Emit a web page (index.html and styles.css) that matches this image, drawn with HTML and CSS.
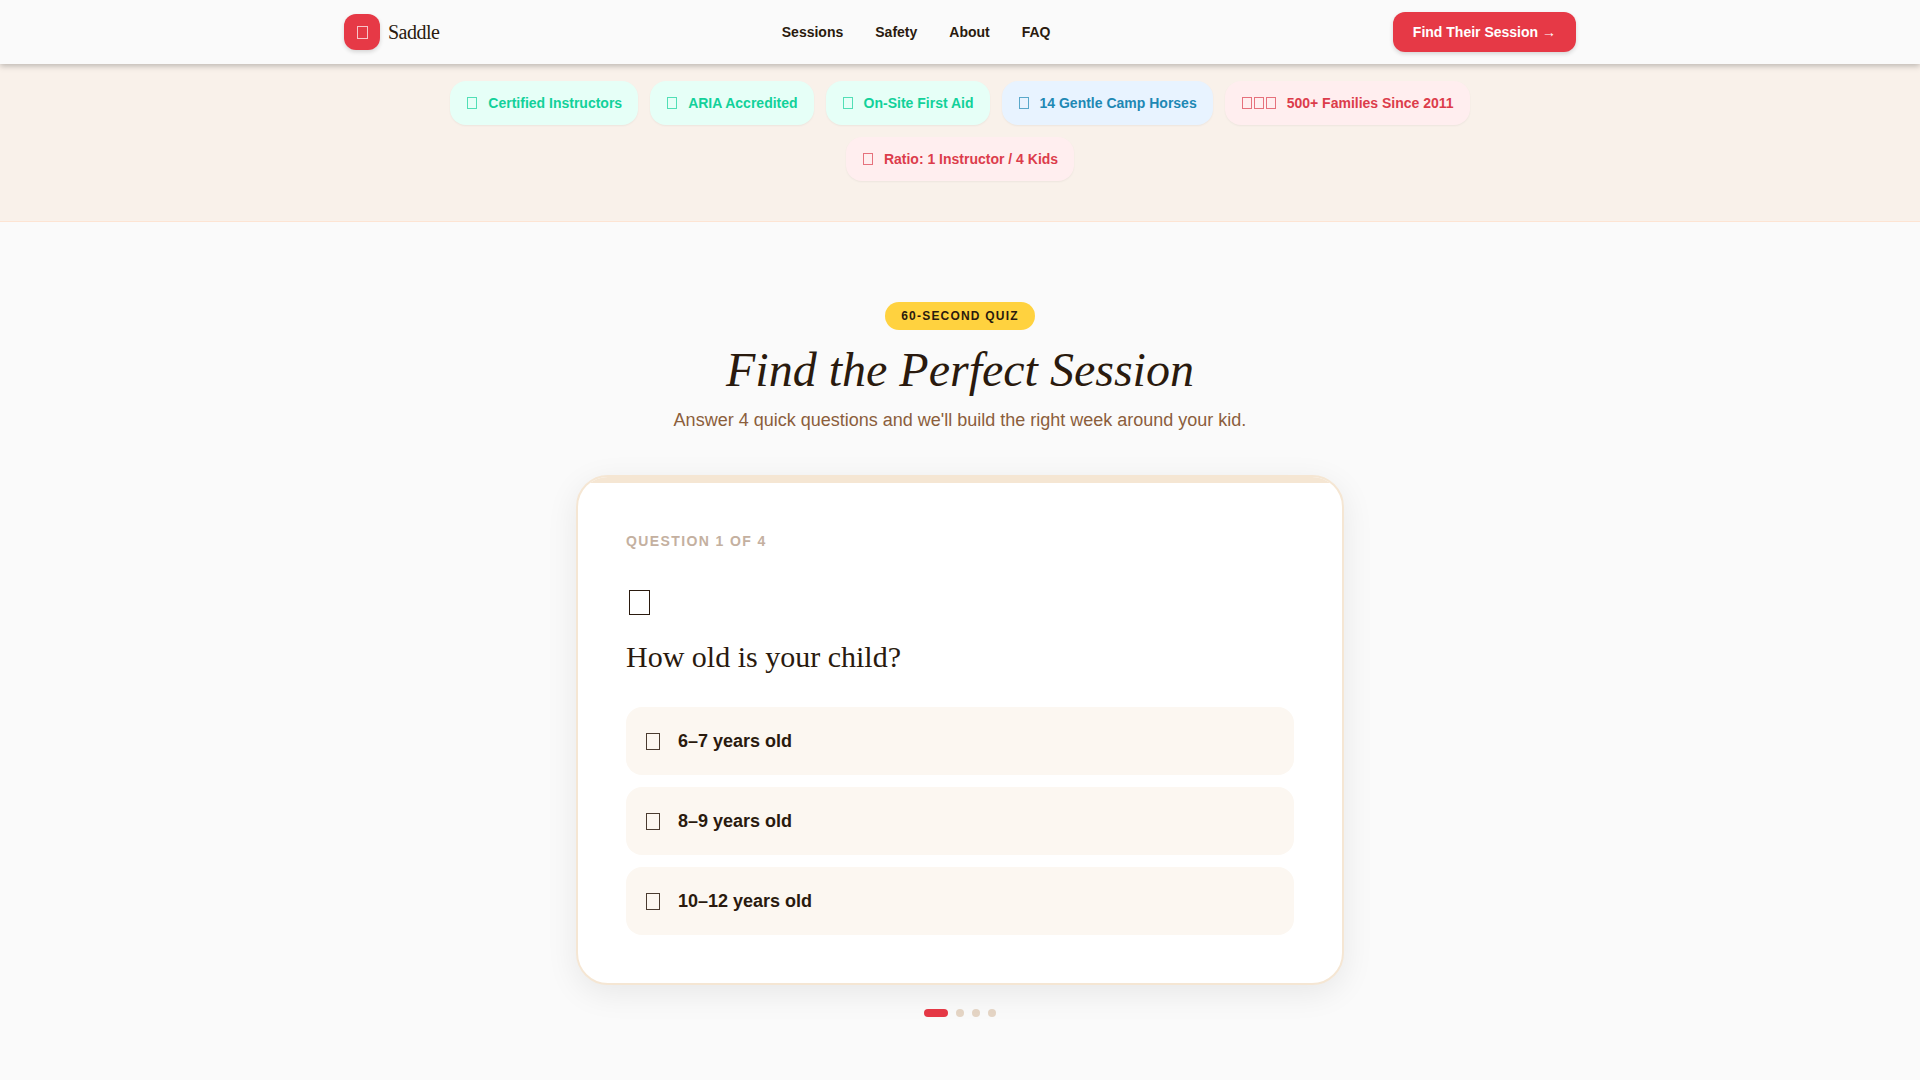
FILE: index.html
```
<!doctype html>
<html lang="en">
  <head>
    <meta charset="utf-8" />
    <meta name="viewport" content="width=device-width, initial-scale=1" />
    <title>Saddle</title>
    <link rel="stylesheet" href="styles.css">
  </head>
  <body>
    <header class="site-header">
      <div class="header-inner">
        <a class="brand" href="#">
          <span class="brand-mark"><i class="glyph glyph-brand"></i></span>
          <span class="brand-name">Saddle</span>
        </a>
        <nav class="main-nav">
          <a href="#sessions">Sessions</a>
          <a href="#safety">Safety</a>
          <a href="#about">About</a>
          <a href="#faq">FAQ</a>
        </nav>
        <a class="cta" href="#quiz">Find Their Session →</a>
      </div>
    </header>

    <main>
      <section class="trust" id="safety">
        <ul class="chips">
          <li class="chip chip-green"><span class="chip-icon"><i class="glyph"></i></span>Certified Instructors</li>
          <li class="chip chip-green"><span class="chip-icon"><i class="glyph"></i></span>ARIA Accredited</li>
          <li class="chip chip-green"><span class="chip-icon"><i class="glyph"></i></span>On-Site First Aid</li>
          <li class="chip chip-blue"><span class="chip-icon"><i class="glyph"></i></span>14 Gentle Camp Horses</li>
          <li class="chip chip-red"><span class="chip-icon"><i class="glyph"></i><i class="glyph"></i><i class="glyph"></i></span>500+ Families Since 2011</li>
          <li class="chip chip-red"><span class="chip-icon"><i class="glyph"></i></span>Ratio: 1 Instructor / 4 Kids</li>
        </ul>
      </section>

      <section class="quiz" id="quiz">
        <span class="badge">60-Second Quiz</span>
        <h1 class="quiz-title">Find the Perfect Session</h1>
        <p class="quiz-lead">Answer 4 quick questions and we'll build the right week around your kid.</p>

        <div class="card">
          <p class="step">Question 1 of 4</p>
          <div class="question-icon"><i class="glyph glyph-large"></i></div>
          <h2 class="question">How old is your child?</h2>
          <div class="options">
            <button type="button" class="option"><i class="glyph glyph-option"></i>6–7 years old</button>
            <button type="button" class="option"><i class="glyph glyph-option"></i>8–9 years old</button>
            <button type="button" class="option"><i class="glyph glyph-option"></i>10–12 years old</button>
          </div>
        </div>

        <div class="dots">
          <span class="dot dot-active"></span>
          <span class="dot"></span>
          <span class="dot"></span>
          <span class="dot"></span>
        </div>
      </section>
    </main>
  </body>
</html>
```
FILE: styles.css
```
* {
  box-sizing: border-box;
}

body {
  margin: 0;
  background: #fafafa;
  color: #2a1a0e;
  font: 16px/24px "Liberation Sans", Arial, sans-serif;
}

h1, h2, p, ul {
  margin: 0;
  padding: 0;
}

a {
  color: inherit;
  text-decoration: none;
}

/* outlined box icon, takes the text colour */
.glyph {
  display: block;
  flex: none;
  width: 10px;
  height: 12px;
  margin: 0 1px;
  border: 1px solid;
  opacity: .7;
}

.glyph-brand {
  width: 11px;
  height: 13px;
}

.glyph-option {
  width: 14px;
  height: 17px;
  margin: 0 2px;
  opacity: .85;
}

.glyph-large {
  width: 21px;
  height: 25px;
  margin: 0 3px;
  opacity: 1;
}

/* header */
.site-header {
  position: sticky;
  top: 0;
  z-index: 10;
  background: #fafafa;
  box-shadow: 0 2px 6px rgba(0, 0, 0, .25);
}

.header-inner {
  display: flex;
  align-items: center;
  justify-content: space-between;
  max-width: 1280px;
  height: 64px;
  margin: 0 auto;
  padding: 0 24px;
}

.brand {
  display: flex;
  align-items: center;
  gap: 8px;
}

.brand-mark {
  display: flex;
  align-items: center;
  justify-content: center;
  width: 36px;
  height: 36px;
  border-radius: 12px;
  background: #e63946;
  color: #fff;
  box-shadow: 0 2px 4px rgba(0, 0, 0, .15);
}

.brand-name {
  font-family: "Liberation Serif", "Times New Roman", serif;
  font-size: 20px;
  letter-spacing: -.5px;
}

.main-nav {
  display: flex;
  gap: 32px;
  font-size: 14px;
  font-weight: bold;
}

.cta {
  padding: 8px 20px;
  border-radius: 12px;
  background: #e63946;
  color: #fff;
  font-size: 14px;
  font-weight: bold;
  box-shadow: 0 2px 4px rgba(0, 0, 0, .15);
}

/* trust chips */
.trust {
  padding: 17px 0 40px;
  background: #f9f1ea;
  border-bottom: 1px solid #fde4d3;
}

.chips {
  display: flex;
  flex-wrap: wrap;
  justify-content: center;
  gap: 12px;
  max-width: 1280px;
  margin: 0 auto;
  padding: 0 24px;
  list-style: none;
}

.chip {
  display: flex;
  align-items: center;
  gap: 10px;
  padding: 10px 16px;
  border-radius: 16px;
  font-size: 14px;
  font-weight: bold;
  box-shadow: 0 1px 2px rgba(0, 0, 0, .05);
}

.chip-icon {
  display: flex;
}

.chip-green {
  background: #e6fff7;
  color: #12d19a;
}

.chip-blue {
  background: #e8f3ff;
  color: #1e88b4;
}

.chip-red {
  background: #ffeeef;
  color: #dc3c4b;
}

/* quiz */
.quiz {
  display: flex;
  flex-direction: column;
  align-items: center;
  padding: 80px 24px;
}

.badge {
  padding: 6px 16px;
  border-radius: 14px;
  background: #ffd23f;
  font-size: 12px;
  line-height: 16px;
  font-weight: bold;
  letter-spacing: 1.2px;
  text-transform: uppercase;
}

.quiz-title {
  margin: 12px 0 8px;
  font: italic 48px/56px "Liberation Serif", "Times New Roman", serif;
}

.quiz-lead {
  color: #8b5e3c;
  font-size: 18px;
  line-height: 28px;
}

.card {
  position: relative;
  overflow: hidden;
  width: 100%;
  max-width: 768px;
  margin-top: 41px;
  padding: 48px;
  border: 2px solid #f5e6d3;
  border-radius: 32px;
  background: #fff;
  box-shadow: 0 8px 32px rgba(0, 0, 0, .08);
}

/* progress track along the top edge */
.card::before {
  content: "";
  position: absolute;
  top: 0;
  left: 0;
  right: 0;
  height: 6px;
  background: #f5e6d3;
}

.step {
  margin-bottom: 24px;
  color: #c4b0a0;
  font-size: 14px;
  line-height: 32px;
  font-weight: bold;
  letter-spacing: 1.4px;
  text-transform: uppercase;
}

.question-icon {
  display: flex;
  align-items: center;
  height: 42px;
}

.question {
  margin: 14px 0 30px;
  font: 30px/40px "Liberation Serif", "Times New Roman", serif;
}

.options {
  display: flex;
  flex-direction: column;
  gap: 12px;
}

.option {
  display: flex;
  align-items: center;
  gap: 16px;
  padding: 20px 18px;
  border: 0;
  border-radius: 16px;
  background: #fcf7f1;
  color: inherit;
  font: bold 18px/28px "Liberation Sans", Arial, sans-serif;
  text-align: left;
  cursor: pointer;
}

.option:hover {
  background: #f5e6d3;
}

.dots {
  display: flex;
  gap: 8px;
  margin-top: 24px;
}

.dot {
  width: 8px;
  height: 8px;
  border-radius: 4px;
  background: #e5d5c5;
}

.dot-active {
  width: 24px;
  background: #e63946;
}
```
